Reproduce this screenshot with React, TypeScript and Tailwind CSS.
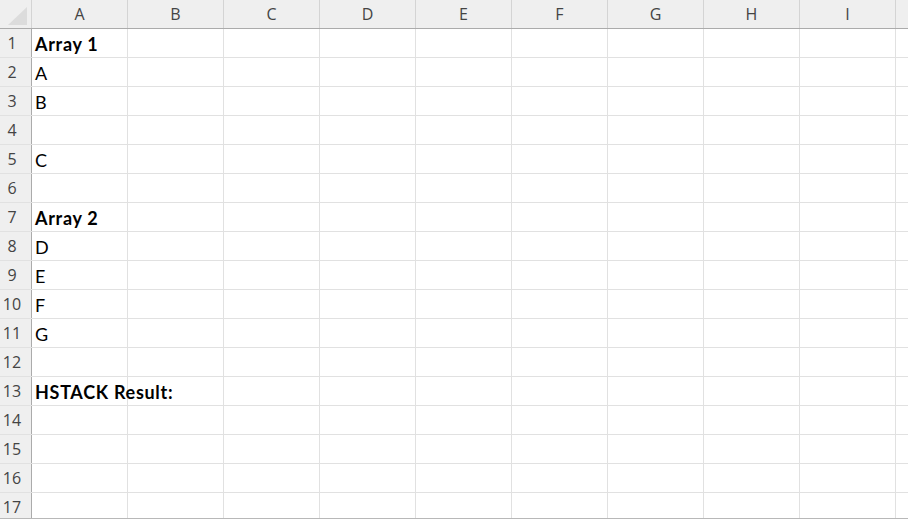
import React from 'react';

const columns = ['A', 'B', 'C', 'D', 'E', 'F', 'G', 'H', 'I'];

const cells: Record<number, { text: string; bold?: boolean }> = {
  1: { text: 'Array 1', bold: true },
  2: { text: 'A' },
  3: { text: 'B' },
  5: { text: 'C' },
  7: { text: 'Array 2', bold: true },
  8: { text: 'D' },
  9: { text: 'E' },
  10: { text: 'F' },
  11: { text: 'G' },
  13: { text: 'HSTACK Result:', bold: true },
};

const rows = Array.from({ length: 17 }, (_, i) => i + 1);

const App: React.FC = () => {
  return (
    <div className="w-[908px] h-[519px] overflow-hidden bg-white border-b border-[#b8b8b8] font-['Lato','Liberation_Sans',sans-serif]">
      {/* Column headers */}
      <div className="flex h-[29px] bg-[#efefef] border-b border-[#ababab]">
        <div className="w-[32px] shrink-0 border-r border-[#d4d4d4] flex items-end justify-end pr-[4px] pb-[3px]">
          <svg width="19" height="18" viewBox="0 0 19 18">
            <polygon points="19,0 19,18 0,18" fill="#dcdcdc" />
          </svg>
        </div>
        {columns.map(c => (
          <div
            key={c}
            className="w-[96px] shrink-0 border-r border-[#d4d4d4] flex items-center justify-center text-[16px] text-[#444444] font-['Open_Sans',sans-serif]"
          >
            {c}
          </div>
        ))}
        <div className="flex-1" />
      </div>

      {/* Rows */}
      {rows.map(r => {
        const cell = cells[r];
        return (
          <div key={r} className="flex h-[29px] border-b border-[#e1e1e1]">
            <div className="w-[32px] shrink-0 bg-[#efefef] border-r border-[#ababab] flex items-center justify-center pr-[7px] text-[16px] text-[#444444] font-['Open_Sans',sans-serif]">
              {r}
            </div>
            <div className="w-[96px] shrink-0 border-r border-[#e1e1e1] flex items-center pl-[3px] pt-[2px] whitespace-nowrap">
              {cell && (
                <span
                  className={`text-[18px] text-black ${cell.bold ? 'font-bold tracking-[0.7px]' : 'tracking-[0.3px]'}`}
                >
                  {cell.text}
                </span>
              )}
            </div>
            {columns.slice(1).map(c => (
              <div key={c} className="w-[96px] shrink-0 border-r border-[#e1e1e1]" />
            ))}
            <div className="flex-1" />
          </div>
        );
      })}
    </div>
  );
};

export default App;
